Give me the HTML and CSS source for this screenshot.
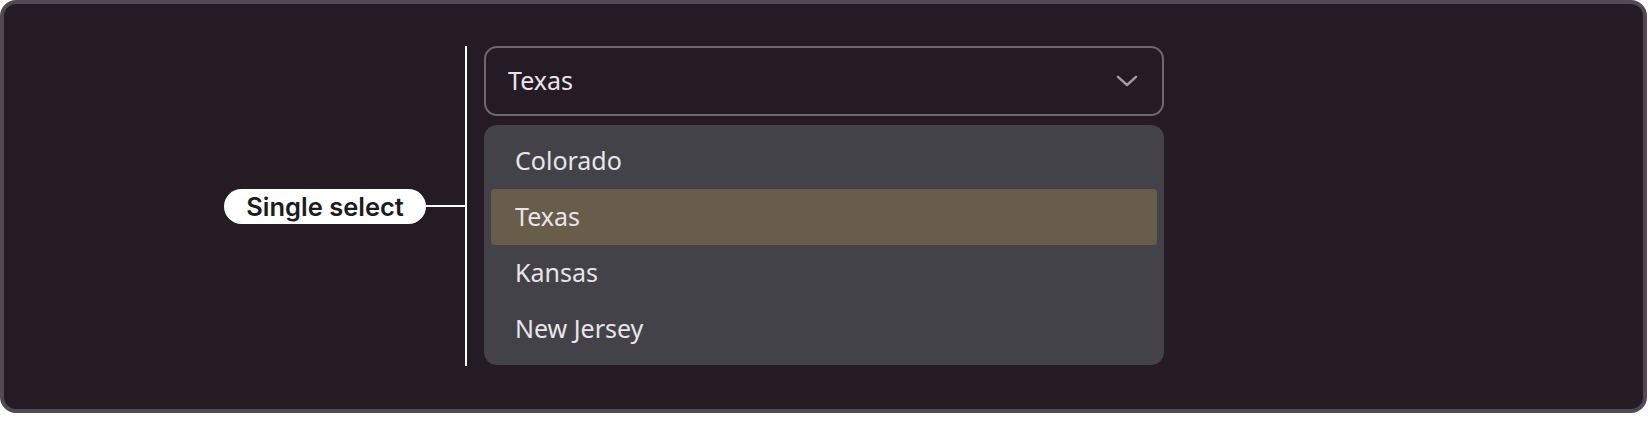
FILE: index.html
```html
<!DOCTYPE html>
<html lang="en">
<head>
<meta charset="utf-8">
<title>Single select</title>
<link rel="stylesheet" href="styles.css">
</head>
<body>
<div class="frame">
  <div class="annotation">
    <span class="pill">Single select</span>
    <span class="connector"></span>
    <span class="bracket"></span>
  </div>
  <div class="field">
    <div class="select">
      <span class="value">Texas</span>
      <svg class="chevron" width="22" height="12" viewBox="0 0 22 12" aria-hidden="true">
        <path d="M2 1.8 L11 10 L20 1.8" fill="none" stroke="#a29ba5" stroke-width="2.4" stroke-linecap="round" stroke-linejoin="round"/>
      </svg>
    </div>
    <ul class="menu">
      <li class="option">Colorado</li>
      <li class="option selected">Texas</li>
      <li class="option">Kansas</li>
      <li class="option">New Jersey</li>
    </ul>
  </div>
</div>
</body>
</html>
```

FILE: styles.css
```css
html, body {
  margin: 0;
  padding: 0;
  background: #ffffff;
}

.frame {
  box-sizing: border-box;
  width: 1647px;
  height: 413px;
  border: 4px solid #514a55;
  border-radius: 16px;
  background: #241b24;
  display: flex;
  align-items: flex-start;
  padding: 42px 0 0 220px;
}

.annotation {
  display: flex;
  align-items: center;
  height: 320px;
}

.pill {
  box-sizing: border-box;
  height: 35px;
  width: 202px;
  border-radius: 18px;
  background: #ffffff;
  color: #1f1a1f;
  font-family: Inter, "Liberation Sans", sans-serif;
  font-weight: 600;
  font-size: 25.5px;
  line-height: 35px;
  text-align: center;
}

.connector {
  width: 39px;
  height: 2px;
  background: #ffffff;
}

.bracket {
  width: 2px;
  height: 320px;
  background: #ffffff;
  align-self: flex-start;
}

.field {
  margin-left: 17px;
  width: 680px;
  display: flex;
  flex-direction: column;
  gap: 9px;
  font-family: "Noto Sans", "Open Sans", sans-serif;
  font-size: 25px;
  color: #e8e6ea;
}

.select {
  box-sizing: border-box;
  height: 70px;
  border: 2px solid #6e6772;
  border-radius: 13px;
  display: flex;
  align-items: center;
  justify-content: space-between;
  padding: 0 24px 0 22px;
}

.value {
  padding-bottom: 2px;
}

.chevron {
  display: block;
}

.menu {
  list-style: none;
  margin: 0;
  padding: 8px 7px;
  background: #434248;
  border-radius: 13px;
  height: 240px;
  box-sizing: border-box;
}

.option {
  height: 56px;
  box-sizing: border-box;
  line-height: 54px;
  padding: 0 0 2px 24px;
  border-radius: 4px;
}

.option.selected {
  background: #685c4b;
}
```
